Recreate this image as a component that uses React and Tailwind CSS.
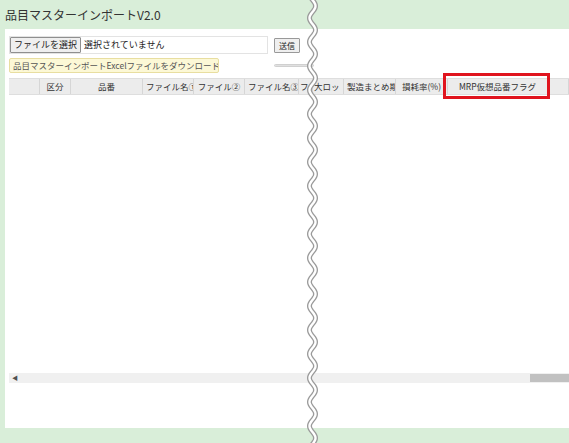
import React from 'react';

const headers = [
  { label: '', w: 'w-[31px]' },
  { label: '区分', w: 'w-[31px]' },
  { label: '品番', w: 'w-[72px]' },
  { label: 'ファイル名①', w: 'w-[51px]' },
  { label: 'ファイル②', w: 'w-[51px]' },
  { label: 'ファイル名③', w: 'w-[54px]' },
  { label: 'フ', w: 'w-[14px]', left: true },
  { label: '大ロッ', w: 'w-[31px]', left: true },
  { label: '製造まとめ期', w: 'w-[52px]' },
  { label: '損耗率(%)', w: 'w-[52px]' },
  { label: 'MRP仮想品番フラグ', w: 'w-[100px]' },
  { label: '', w: 'flex-1' },
];

// wavy break line, computed once
const wavePath = (() => {
  let d = '';
  for (let y = -2; y <= 446; y += 1) {
    const x = 312.5 + 3 * Math.sin((y / 24) * Math.PI * 2);
    d += (y === -2 ? 'M' : 'L') + x.toFixed(2) + ' ' + y + ' ';
  }
  return d;
})();

const App = () => {
  return (
    <div
      className="relative w-[569px] h-[443px] overflow-hidden bg-[#d9eed9] text-[#333]"
      style={{ fontFamily: '"Noto Sans CJK JP", "Noto Sans", sans-serif' }}
    >
      {/* Title */}
      <div className="h-[29px] pl-[5px] pt-[7px] text-[12px] leading-[15px] text-[#333]">
        品目マスターインポートV2.0
      </div>

      {/* Main panel */}
      <div className="ml-[5px] h-[399px] bg-white pl-[4px] pt-[7px] flex flex-col">
        <div className="flex items-center h-[18px]">
          <div className="flex items-center w-[259px] h-[18px] border border-[#e3e3e3]">
            <button className="h-[16px] px-[3px] border border-[#8f8f8f] bg-[#efefef] text-[9px] leading-[14px] text-[#222] rounded-[1px]">
              ファイルを選択
            </button>
            <span className="ml-[3px] text-[9px] leading-[14px] text-[#222]">選択されていません</span>
          </div>
          <button className="ml-[6px] h-[15px] px-[4px] border border-[#999] bg-[#efefef] text-[8px] leading-[13px] text-[#222] rounded-[1px]">
            送信
          </button>
        </div>

        <div className="flex items-center mt-[4px] h-[15px]">
          <div className="h-[15px] w-[210px] px-[3px] border border-[#e8dea0] bg-[#fcf8d6] text-[8.5px] leading-[13px] text-[#555] rounded-[2px] whitespace-nowrap overflow-hidden">
            品目マスターインポートExcelファイルをダウンロード
          </div>
          <div className="ml-[55px] w-[40px] h-[3px] rounded-full bg-[#e0e0e0] border border-[#d0d0d0]" />
        </div>

        {/* Table header */}
        <div className="flex mt-[5px] h-[17px] bg-[#f0f0f0] border-y border-[#dedede]">
          {headers.map((h, i) => (
            <div
              key={i}
              className={`${h.w} shrink-0 h-full border-r border-[#d6d6d6] bg-[#ececec] overflow-hidden whitespace-nowrap text-[8.5px] leading-[15px] text-[#333] ${
                h.left ? 'text-left px-[1px]' : 'text-center px-[3px]'
              }`}
            >
              {h.label}
            </div>
          ))}
        </div>

        {/* Table body */}
        <div className="h-[278px]" />

        {/* Horizontal scrollbar */}
        <div className="flex items-center h-[10px] bg-[#f0f0f0]">
          <span className="ml-[3px] text-[6px] leading-[10px] text-[#505050]">◀</span>
          <div className="ml-auto w-[39px] h-[8px] bg-[#c1c1c1]" />
        </div>
      </div>

      {/* Wavy break line */}
      <svg className="absolute left-0 top-0 pointer-events-none" width="569" height="443">
        <path d={wavePath} fill="none" stroke="#9a9a9a" strokeWidth="5" />
        <path d={wavePath} fill="none" stroke="#ffffff" strokeWidth="2.4" />
      </svg>

      {/* Highlight box */}
      <div className="absolute left-[443px] top-[73px] w-[107px] h-[26px] border-[3px] border-[#e0141e]" />
    </div>
  );
};

export default App;
